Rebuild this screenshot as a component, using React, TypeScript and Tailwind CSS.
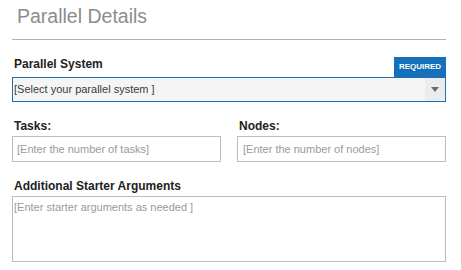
export default function App() {
  return (
    <div className="h-[270px] w-[461px] bg-white font-['Liberation_Sans',Arial,sans-serif]">
      <div className="ml-[12px] w-[434px]">
        <div className="border-b border-[#b3b3b3] pt-[4px] pb-[11px] pl-[5px]">
          <h2 className="text-[19.5px] leading-[24px] text-[#8c8c8c]">Parallel Details</h2>
        </div>

        <div className="mt-[16px] flex items-end justify-between">
          <label className="mb-[5px] pl-[2px] text-[12px] leading-[16px] font-bold text-[#222]">
            Parallel System
          </label>
          <span className="flex h-[20px] w-[52px] items-center justify-center bg-[#1470b8] text-[8px] font-bold text-white">
            REQUIRED
          </span>
        </div>
        <div className="flex h-[25px] border border-[#1a6fb5] bg-[#f5f5f5]">
          <div className="flex flex-1 items-center pl-[1px] text-[11px] text-[#3a3a3a]">
            [Select your parallel system ]
          </div>
          <div className="flex w-[20px] items-center justify-center bg-[#ececec]">
            <svg width="8" height="5" viewBox="0 0 8 5">
              <path d="M0 0h8L4 5z" fill="#6b6b6b" />
            </svg>
          </div>
        </div>

        <div className="mt-[16px] flex gap-[16px]">
          <div className="flex w-[209px] flex-col">
            <label className="mb-[2px] pl-[2px] text-[12px] leading-[16px] font-bold text-[#222]">Tasks:</label>
            <div className="flex h-[26px] items-center border border-[#bdbdbd] px-[4px] text-[11px] text-[#9a9a9a]">
              [Enter the number of tasks]
            </div>
          </div>
          <div className="flex w-[209px] flex-col">
            <label className="mb-[2px] pl-[2px] text-[12px] leading-[16px] font-bold text-[#222]">Nodes:</label>
            <div className="flex h-[26px] items-center border border-[#bdbdbd] px-[5px] text-[11px] text-[#9a9a9a]">
              [Enter the number of nodes]
            </div>
          </div>
        </div>

        <div className="mt-[16px] flex flex-col">
          <label className="mb-[2px] pl-[2px] text-[12px] leading-[16px] font-bold text-[#222]">
            Additional Starter Arguments
          </label>
          <div className="h-[66px] border border-[#bdbdbd] pt-[3px] pl-[1px] text-[11px] leading-[14px] text-[#9a9a9a]">
            [Enter starter arguments as needed ]
          </div>
        </div>
      </div>
    </div>
  );
}
